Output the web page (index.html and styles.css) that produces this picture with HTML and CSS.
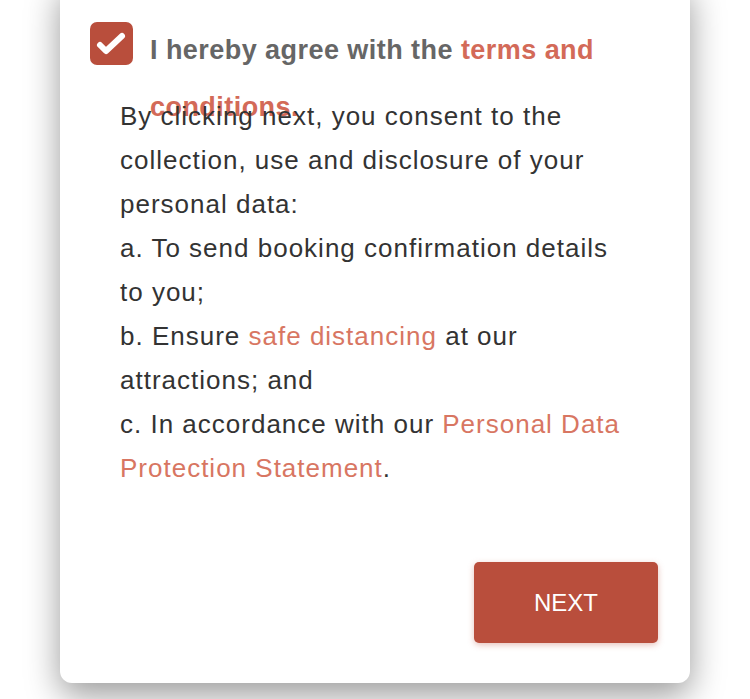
FILE: index.html
```html
<!DOCTYPE html>
<html>
    <head>
        <meta charset="UTF-8">
        <meta name="viewport" content="width=device-width, initial-scale=1.0">
        <title>Consent</title>
        <link rel="stylesheet" href="styles.css">
    </head>
    <body>
        <div class="card">
            <div class="agree-row">
                <span class="checkbox">
                    <svg width="43" height="43" viewBox="0 0 43 43">
                        <path d="M10 23 L16 29 L32 14" fill="none" stroke="white" stroke-width="6" stroke-linecap="round" stroke-linejoin="round"/>
                    </svg>
                </span>
                <div class="agree-label">I hereby agree with the <a href="#" class="link-bold">terms and conditions.</a></div>
            </div>
            <p class="consent-text">
                By clicking next, you consent to the collection, use and disclosure of your personal data:<br>
                a. To send booking confirmation details to you;<br>
                b. Ensure <a href="#" class="link">safe distancing</a> at our attractions; and<br>
                c. In accordance with our <a href="#" class="link">Personal Data Protection Statement</a>.
            </p>
            <div class="actions">
                <button class="next-button">NEXT</button>
            </div>
        </div>
    </body>
</html>
```

FILE: styles.css
```css
body {
    margin: 0;
    padding: 0;
    min-height: 100vh;
    background-color: #ffffff;
    font-family: "Liberation Sans", Arial, sans-serif;
    overflow: hidden;
}
.card {
    width: 630px;
    box-sizing: border-box;
    margin: -20px auto 0 auto;
    padding: 42px 32px 40px 30px;
    background-color: #ffffff;
    border-radius: 12px;
    box-shadow: 0 12px 34px rgba(0, 0, 0, 0.4);
}
.agree-row {
    display: flex;
    align-items: flex-start;
    gap: 17px;
    height: 43px;
}
.checkbox {
    flex: none;
    width: 43px;
    height: 43px;
    border-radius: 7px;
    background-color: #b94e3c;
}
.checkbox svg {
    display: block;
}
.agree-label {
    height: 43px;
    font-size: 27px;
    font-weight: bold;
    letter-spacing: 0.45px;
    line-height: 57px;
    color: #666666;
}
.link-bold {
    color: #d36a58;
    text-decoration: none;
}
.consent-text {
    margin: 29px 0 0 30px;
    width: 512px;
    font-size: 26px;
    letter-spacing: 1px;
    line-height: 44px;
    color: #333333;
}
.link {
    color: #d87662;
    text-decoration: none;
}
.actions {
    display: flex;
    justify-content: flex-end;
    margin-top: 72px;
}
.next-button {
    width: 184px;
    height: 81px;
    border: none;
    border-radius: 5px;
    background-color: #b94e3c;
    color: #ffffff;
    font-family: "Liberation Sans", Arial, sans-serif;
    font-size: 24px;
    box-shadow: 0 2px 6px rgba(185, 78, 60, 0.35);
    cursor: pointer;
}
```
